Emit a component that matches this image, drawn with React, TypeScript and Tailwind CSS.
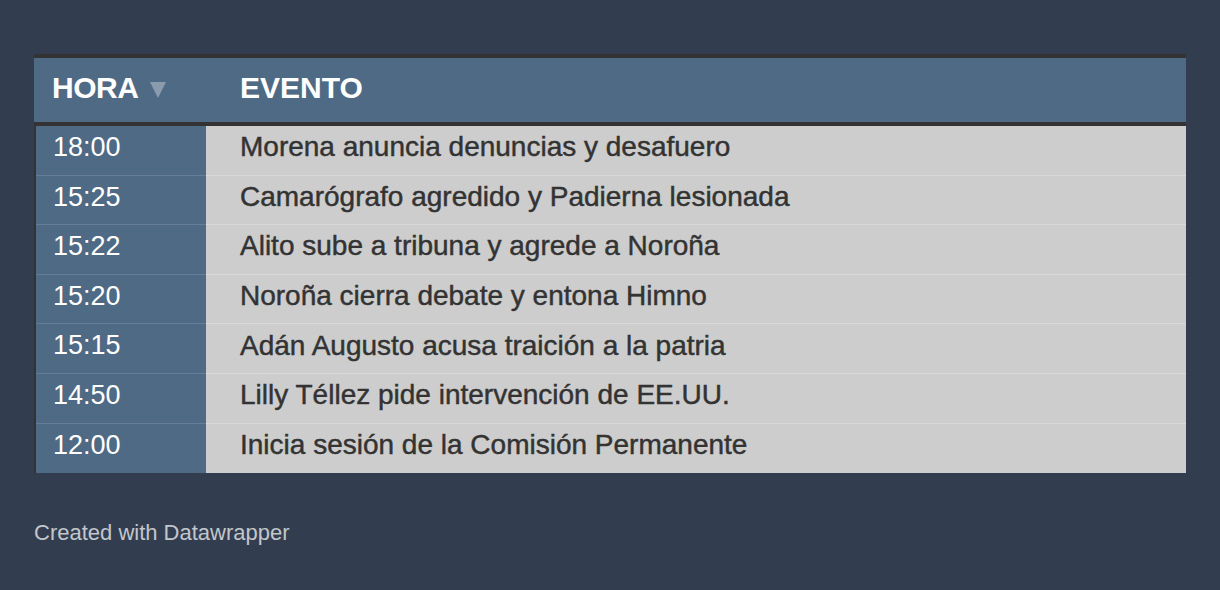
const rows = [
  { hora: '18:00', evento: 'Morena anuncia denuncias y desafuero' },
  { hora: '15:25', evento: 'Camarógrafo agredido y Padierna lesionada' },
  { hora: '15:22', evento: 'Alito sube a tribuna y agrede a Noroña' },
  { hora: '15:20', evento: 'Noroña cierra debate y entona Himno' },
  { hora: '15:15', evento: 'Adán Augusto acusa traición a la patria' },
  { hora: '14:50', evento: 'Lilly Téllez pide intervención de EE.UU.' },
  { hora: '12:00', evento: 'Inicia sesión de la Comisión Permanente' },
];

const App = (): JSX.Element => {
  return (
    <div className="min-h-[590px] w-[1220px] bg-[#323e4f] px-[34px] pt-[54px] font-['Liberation_Sans',Arial,sans-serif]">
      <div className="w-[1152px]">
        <div className="flex h-[72px] border-y-4 border-[#333333] bg-[#4f6a85] text-white">
          <div className="flex w-[172px] items-center pb-[6px] pl-[18px]">
            <span className="text-[30px] font-bold tracking-[-0.5px]">{'HORA'}</span>
            <svg className="ml-[12px] mt-[6px]" width="16" height="16" viewBox="0 0 16 16">
              <polygon points="0,0 16,0 8,16" fill="#8a9bad" />
            </svg>
          </div>
          <div className="flex items-center pb-[6px] pl-[34px]">
            <span className="text-[30px] font-bold">{'EVENTO'}</span>
          </div>
        </div>
        <div className="border-l-2 border-[#333333]">
          {rows.map((row, i) => (
            <div
              key={`row-${i}`}
              className={`flex h-[49.6px] ${i < rows.length - 1 ? 'border-b border-[#657d96]' : ''}`}
            >
              <div className="flex w-[170px] items-center bg-[#4f6a85] pb-[6px] pl-[17px] text-[27px] text-white">
                {row.hora}
              </div>
              <div
                className={`flex flex-1 items-center bg-[#cdcdcd] pb-[6px] pl-[34px] text-[28px] text-[#333333] [-webkit-text-stroke:0.45px_#333333] ${
                  i < rows.length - 1 ? 'border-b border-[#d9d9d9] -mb-px' : ''
                }`}
              >
                {row.evento}
              </div>
            </div>
          ))}
        </div>
      </div>
      <div className="mt-[43px] text-[22px] text-[#c3c6cb]">{'Created with Datawrapper'}</div>
    </div>
  );
};

export default App;
